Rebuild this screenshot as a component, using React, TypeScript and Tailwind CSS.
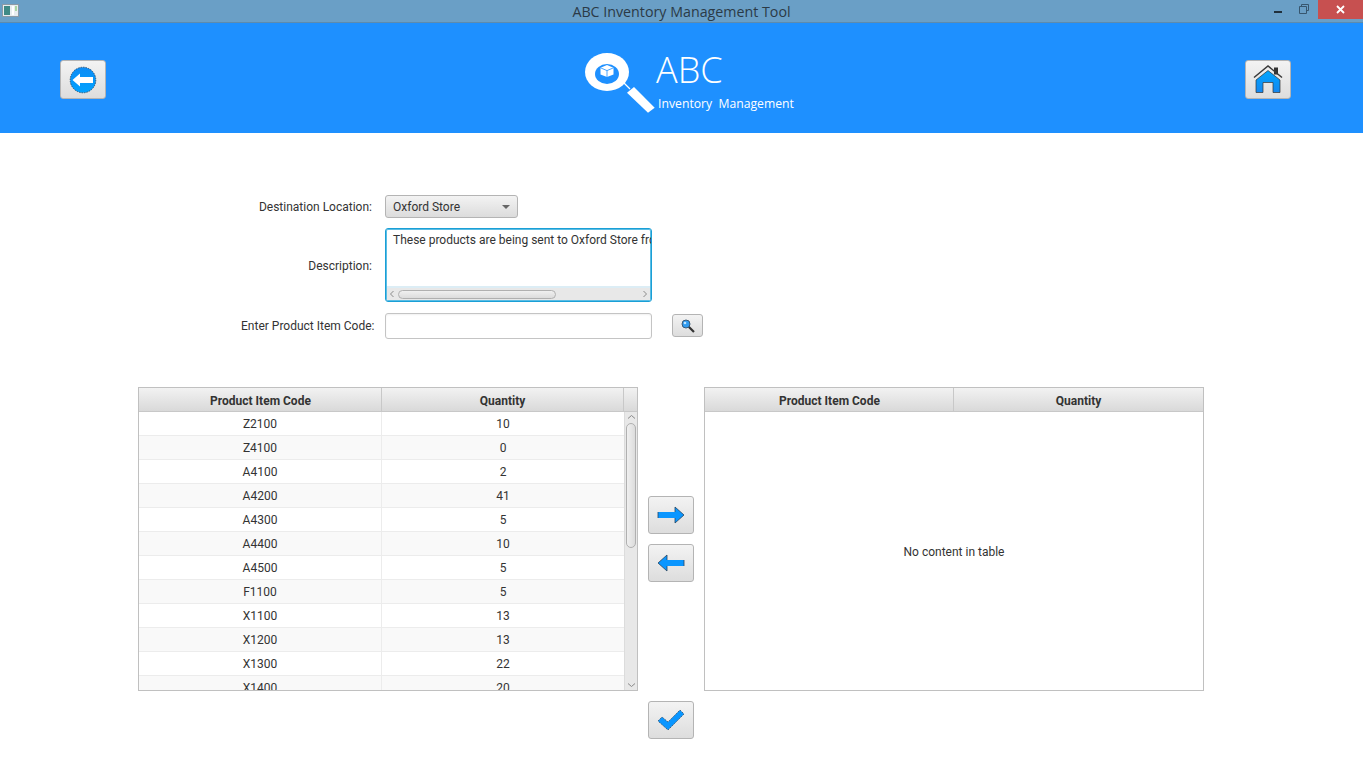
const rows = [
  ["Z2100", "10"],
  ["Z4100", "0"],
  ["A4100", "2"],
  ["A4200", "41"],
  ["A4300", "5"],
  ["A4400", "10"],
  ["A4500", "5"],
  ["F1100", "5"],
  ["X1100", "13"],
  ["X1200", "13"],
  ["X1300", "22"],
  ["X1400", "20"],
]

function IconDefs() {
  return (
    <svg width="0" height="0" className="absolute">
      <defs>
        <linearGradient id="blue" x1="0" y1="0" x2="0" y2="1">
          <stop offset="0" stopColor="#00a6ff" />
          <stop offset="1" stopColor="#1487f0" />
        </linearGradient>
        <linearGradient id="circle" x1="0" y1="0" x2="0" y2="1">
          <stop offset="0" stopColor="#0d8cf5" />
          <stop offset="1" stopColor="#00a2ff" />
        </linearGradient>
      </defs>
    </svg>
  )
}

function ToolButton({ className, children }: { className: string; children: React.ReactNode }) {
  return (
    <div className={`flex items-center justify-center rounded-[3px] border border-[#b4b4b4] bg-gradient-to-b from-[#f3f3f3] to-[#dddddd] ${className}`}>
      {children}
    </div>
  )
}

function HeaderCell({ className, label }: { className: string; label?: string }) {
  return (
    <div className={`flex h-full items-center justify-center border-r border-[#c8c8c8] pt-[2px] text-xs font-bold text-[#333] ${className}`}>
      {label}
    </div>
  )
}

function TableHeader({ children }: { children: React.ReactNode }) {
  return (
    <div className="flex h-6 shrink-0 border-b border-[#c8c8c8] bg-gradient-to-b from-[#f2f2f2] to-[#d9d9d9]">
      {children}
    </div>
  )
}

export default function App() {
  return (
    <div className="flex h-[764px] w-[1363px] flex-col overflow-hidden bg-white font-['Roboto',sans-serif] text-xs text-[#333]">
      <IconDefs />

      <div className="grid h-[23px] shrink-0 grid-cols-[1fr_auto_1fr] items-start border-b border-[#5d8bad] bg-[#6a9fc6]">
        <svg width="17" height="13" viewBox="0 0 17 13" className="mt-[4px] ml-[2px]">
          <rect x="0.5" y="0.5" width="16" height="12" fill="#e8ecef" stroke="#8c9aa5" />
          <rect x="2" y="2" width="6" height="9" fill="#3f8a86" />
          <rect x="10" y="2" width="2" height="9" fill="#ffffff" />
          <rect x="13" y="2" width="2" height="5" fill="#a9d6a2" />
        </svg>
        <div className="pt-[3px] font-['Open_Sans',sans-serif] text-[14.25px] leading-[18px] text-[#2b3a46]">
          ABC Inventory Management Tool
        </div>
        <div className="flex items-start justify-end">
          <div className="mt-[11px] mr-[17px] h-[2px] w-2 bg-[#20303c]" />
          <svg width="10" height="10" viewBox="0 0 10 10" className="mt-[4px] mr-[9px]">
            <path d="M2.5 2.5V.5h7v6H7.5M.5 2.5h7v7h-7z" fill="none" stroke="#37566e" />
          </svg>
          <div className="flex h-[19px] w-[45px] items-center justify-center bg-[#c75050]">
            <svg width="9" height="9" viewBox="0 0 9 9">
              <path d="M1 1l7 7M8 1L1 8" stroke="#fff" strokeWidth="1.8" />
            </svg>
          </div>
        </div>
      </div>

      <div className="flex h-[110px] shrink-0 items-center justify-between bg-[#1e90ff] pr-[72px] pl-[60px]">
        <ToolButton className="mt-[3px] h-[39px] w-[46px]">
          <svg width="28" height="28" viewBox="0 0 28 28">
            <circle cx="14" cy="14" r="12.8" fill="url(#circle)" stroke="#20405f" strokeWidth="0.8" strokeDasharray="1.5 1" />
            <path d="M3.5 14L11 7.5V11H24V17H11V20.5Z" fill="#fff" />
          </svg>
        </ToolButton>

        <div className="mt-[7px] ml-[26px] flex items-center">
          <svg width="72" height="64" viewBox="0 0 72 64" className="mt-[3px]">
            <ellipse cx="24" cy="21" rx="22" ry="19" fill="#fff" />
            <ellipse cx="24" cy="23" rx="12" ry="10" fill="#1e90ff" />
            <path d="M24 14l6.5 2.8v6.6L24 26l-6.5-2.6v-6.6z" fill="#fff" />
            <path d="M17.5 16.8l6.5 2.8 6.5-2.8M24 19.6V26" fill="none" stroke="#1e90ff" strokeWidth="0.8" />
            <path d="M41 32l6 6" stroke="#fff" strokeWidth="1.2" />
            <path d="M51 36L71.7 56.7 65 61.7 44 41.7Z" fill="#fff" />
          </svg>
          <div className="ml-[1px] flex flex-col">
            <span className="font-['Open_Sans',sans-serif] text-[36px] leading-[38px] font-light text-white">ABC</span>
            <span className="mt-[7px] ml-[2px] font-['Open_Sans',sans-serif] text-[12.2px] leading-[16px] whitespace-pre text-white">
              Inventory  Management
            </span>
          </div>
        </div>

        <ToolButton className="mt-[3px] h-[39px] w-[46px]">
          <svg width="30" height="30" viewBox="0 0 30 30">
            <rect x="21" y="2.5" width="4" height="7" fill="#333" />
            <path d="M1 12.5L15 1L29 12.5" fill="none" stroke="#3a3a3a" strokeWidth="1.5" />
            <path d="M15 5.5L27 15V27.5H20V17.5H10V27.5H3V15Z" fill="url(#blue)" stroke="#333" strokeWidth="0.7" />
          </svg>
        </ToolButton>
      </div>

      <div className="flex flex-col pt-[62px]">
        <div className="flex h-[23px] items-center">
          <div className="w-[372px] text-right">Destination Location:</div>
          <div className="ml-[13px] flex h-[23px] w-[133px] items-center justify-between rounded-[3px] border border-[#b4b4b4] bg-gradient-to-b from-[#f3f3f3] to-[#dcdcdc] px-[7px]">
            <span>Oxford Store</span>
            <span className="h-0 w-0 border-x-[4px] border-t-[4px] border-x-transparent border-t-[#666]" />
          </div>
        </div>

        <div className="mt-[10px] flex h-[74px] items-center">
          <div className="w-[372px] pt-[2px] text-right">Description:</div>
          <div className="ml-[13px] flex h-[74px] w-[267px] flex-col overflow-hidden rounded-[3px] border border-[#1a9fd6] shadow-[inset_0_0_0_1px_#5bbde4]">
            <div className="flex-1 overflow-hidden pt-[3px] pl-[7px] leading-[16px] whitespace-nowrap">
              These products are being sent to Oxford Store from the warehouse
            </div>
            <div className="mx-[1px] mb-[1px] flex h-[14px] shrink-0 items-center border-t-2 border-[#dcedf5] bg-[#e8e8e8] px-[2px]">
              <svg width="6" height="8" viewBox="0 0 6 8">
                <path d="M4.5 1L1.5 4l3 3" fill="none" stroke="#8a8a8a" />
              </svg>
              <div className="ml-[3px] h-[9px] w-[158px] rounded-full border border-[#b0b0b0] bg-gradient-to-b from-[#f0f0f0] to-[#dcdcdc]" />
              <svg width="6" height="8" viewBox="0 0 6 8" className="ml-auto">
                <path d="M1.5 1l3 3-3 3" fill="none" stroke="#8a8a8a" />
              </svg>
            </div>
          </div>
        </div>

        <div className="mt-[11px] flex h-[26px] items-center">
          <div className="w-[374.5px] text-right">Enter Product Item Code:</div>
          <div className="ml-[10.5px] h-[26px] w-[267px] rounded-[3px] border border-[#c4c4c4] bg-white shadow-[inset_0_1px_2px_rgba(0,0,0,0.06)]" />
          <ToolButton className="mt-[-1px] ml-[20px] h-[23px] w-[31px]">
            <svg width="14" height="14" viewBox="0 0 14 14">
              <path d="M7.5 7.5L13 13" stroke="#333" strokeWidth="2.2" />
              <circle cx="5" cy="5" r="4" fill="#2f9bf0" stroke="#3a5a78" />
              <circle cx="4" cy="4" r="1.3" fill="#bfe4ff" />
            </svg>
          </ToolButton>
        </div>

        <div className="mt-[48px] flex h-[304px] items-stretch pl-[138px]">
          <div className="flex w-[500px] flex-col overflow-hidden border border-[#c0c0c0]">
            <TableHeader>
              <HeaderCell className="w-[243px] pl-[1px]" label="Product Item Code" />
              <HeaderCell className="w-[242px]" label="Quantity" />
              <div className="flex-1" />
            </TableHeader>
            <div className="flex min-h-0 flex-1">
              <div className="min-w-0 flex-1 overflow-hidden">
                {rows.map(([code, qty], index) => (
                  <div
                    key={code}
                    className={`flex h-6 border-b border-[#ececec] ${index % 2 === 1 ? "bg-[#f9f9f9]" : "bg-white"}`}
                  >
                    <div className="flex w-[243px] items-center justify-center border-r border-[#ececec]">{code}</div>
                    <div className="flex w-[242px] items-center justify-center">{qty}</div>
                  </div>
                ))}
              </div>
              <div className="flex w-[13px] shrink-0 flex-col items-center border-l border-[#dcdcdc] bg-[#e8e8e8]">
                <svg width="9" height="6" viewBox="0 0 9 6" className="mt-[2px] shrink-0">
                  <path d="M1 4.5l3.5-3 3.5 3" fill="none" stroke="#8a8a8a" />
                </svg>
                <div className="mt-[3px] h-[125px] w-[10px] shrink-0 rounded-full border border-[#b0b0b0] bg-gradient-to-r from-[#f0f0f0] to-[#dcdcdc]" />
                <svg width="9" height="6" viewBox="0 0 9 6" className="mt-auto mb-[2px] shrink-0">
                  <path d="M1 1.5l3.5 3 3.5-3" fill="none" stroke="#8a8a8a" />
                </svg>
              </div>
            </div>
          </div>

          <div className="ml-[10px] flex w-[46px] flex-col items-center gap-[10px] pt-[109px]">
            <ToolButton className="h-[38px] w-[46px]">
              <svg width="28" height="20" viewBox="0 0 28 20">
                <path d="M1 7h17V2l9 8-9 8v-5H1Z" fill="#0a96ff" />
                <path d="M1 7v6M18 7V2l9 8-9 8v-5" fill="none" stroke="#26445f" strokeWidth="0.8" />
              </svg>
            </ToolButton>
            <ToolButton className="h-[38px] w-[46px]">
              <svg width="28" height="20" viewBox="0 0 28 20">
                <path d="M27 7H10V2l-9 8 9 8v-5h17Z" fill="#0a96ff" />
                <path d="M27 7v6M10 7V2l-9 8 9 8v-5" fill="none" stroke="#26445f" strokeWidth="0.8" />
              </svg>
            </ToolButton>
          </div>

          <div className="ml-[10px] flex w-[500px] flex-col border border-[#c0c0c0]">
            <TableHeader>
              <HeaderCell className="w-[249px] pl-[1px]" label="Product Item Code" />
              <HeaderCell className="flex-1 border-r-0" label="Quantity" />
            </TableHeader>
            <div className="flex flex-1 items-center justify-center pt-[2px]">No content in table</div>
          </div>
        </div>

        <div className="mt-[10px] flex pl-[648px]">
          <ToolButton className="h-[38px] w-[46px]">
            <svg width="28" height="22" viewBox="0 0 28 22">
              <path d="M1 12l4-4 6 5L23 1l4 4-16 16Z" fill="#0a96ff" stroke="#26445f" strokeWidth="0.7" strokeDasharray="2 1" />
            </svg>
          </ToolButton>
        </div>
      </div>
    </div>
  )
}
